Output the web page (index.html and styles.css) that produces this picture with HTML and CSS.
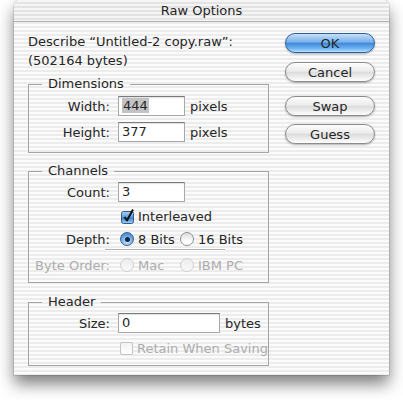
FILE: index.html
```html
<!DOCTYPE html>
<html lang="en">
<head>
    <meta charset="UTF-8">
    <meta name="viewport" content="width=device-width, initial-scale=1.0">
    <title>Raw Options</title>
    <link rel="stylesheet" href="styles.css">
</head>
<body>
    <div class="window">
        <div class="titlebar">Raw Options</div>

        <div class="body">
            <div class="main">
                <p class="describe">Describe “Untitled-2 copy.raw”:<br>(502164 bytes)</p>

                <!-- Dimensions -->
                <fieldset class="group dims">
                    <legend>Dimensions</legend>
                    <div class="row">
                        <span class="lbl">Width:</span>
                        <span class="field"><span class="sel">444</span></span>
                        <span class="unit">pixels</span>
                    </div>
                    <div class="row second">
                        <span class="lbl">Height:</span>
                        <span class="field">377</span>
                        <span class="unit">pixels</span>
                    </div>
                </fieldset>

                <!-- Channels -->
                <fieldset class="group channels">
                    <legend>Channels</legend>
                    <div class="row">
                        <span class="lbl">Count:</span>
                        <span class="field">3</span>
                    </div>
                    <div class="row check-row">
                        <span class="lbl"></span>
                        <span class="opt">
                            <svg class="check" width="16" height="16" viewBox="0 0 16 16">
                                <defs>
                                    <linearGradient id="gel" x1="0" y1="0" x2="0" y2="1">
                                        <stop offset="0" stop-color="#a9d0f5"/>
                                        <stop offset="0.45" stop-color="#5f9fe0"/>
                                        <stop offset="0.55" stop-color="#3c82d4"/>
                                        <stop offset="1" stop-color="#9fd6ff"/>
                                    </linearGradient>
                                </defs>
                                <rect x="1.5" y="3.5" width="12" height="12" rx="2" fill="url(#gel)" stroke="#3a5a85"/>
                                <path d="M4.5 9 L7 12.5 L13 1.5" fill="none" stroke="#111" stroke-width="2" stroke-linejoin="round"/>
                            </svg>
                            Interleaved
                        </span>
                    </div>
                    <div class="row depth-row">
                        <span class="lbl">Depth:</span>
                        <span class="opt first"><span class="radio on"></span>8 Bits</span>
                        <span class="opt"><span class="radio"></span>16 Bits</span>
                    </div>
                    <div class="sep"></div>
                    <div class="row byte-row disabled">
                        <span class="lbl">Byte Order:</span>
                        <span class="opt first"><span class="radio"></span>Mac</span>
                        <span class="opt"><span class="radio"></span>IBM PC</span>
                    </div>
                </fieldset>

                <!-- Header -->
                <fieldset class="group header">
                    <legend>Header</legend>
                    <div class="row">
                        <span class="lbl">Size:</span>
                        <span class="field wide">0</span>
                        <span class="unit">bytes</span>
                    </div>
                    <div class="row retain-row disabled">
                        <span class="lbl"></span>
                        <span class="opt"><span class="box"></span>Retain When Saving</span>
                    </div>
                </fieldset>
            </div>

            <div class="buttons">
                <div class="btn default">OK</div>
                <div class="btn cancel">Cancel</div>
                <div class="btn swap">Swap</div>
                <div class="btn guess">Guess</div>
            </div>
        </div>
    </div>
</body>
</html>
```

FILE: styles.css
```css
* {
    box-sizing: border-box;
}

html {
    background: #fff;
}

body {
    margin: 0;
    min-height: 400px;
    padding-bottom: 25px;
    font-family: "DejaVu Sans", "Noto Sans", sans-serif;
    font-size: 13px;
    color: #262626;
}

.window {
    width: 375px;
    height: 375px;
    margin-left: 14px;
    border-radius: 6px 6px 0 0;
    background: repeating-linear-gradient(to bottom, #fbfbfb 0, #fbfbfb 2px, #ececec 2px, #ececec 4px);
    box-shadow: 0 0 0 1px rgba(0, 0, 0, 0.1), 0 9px 16px rgba(0, 0, 0, 0.5);
}

.titlebar {
    height: 22px;
    line-height: 22px;
    text-align: center;
    border-bottom: 1px solid #b0b0b0;
    border-radius: 6px 6px 0 0;
    background: repeating-linear-gradient(to bottom, #f5f5f5 0, #f5f5f5 2px, #e3e3e3 2px, #e3e3e3 4px);
}

.body {
    display: flex;
    justify-content: space-between;
    padding: 10px 14px 0;
}

.main {
    width: 241px;
}

.describe {
    margin: 0;
    line-height: 19px;
}

/* group boxes */
.group {
    margin: 10px 0 0;
    padding: 3px 0 7px;
    border: 1px solid #a5a5a5;
    min-width: 0;
}

.group legend {
    margin-left: 13px;
    padding: 0 6px;
    line-height: 16px;
}

.dims {
    margin-top: 6px;
    padding: 4px 0 10px;
}

.header {
    margin-top: 11px;
    padding-bottom: 7px;
}

.row {
    display: flex;
    align-items: center;
    height: 20px;
}

.row.second {
    margin-top: 6px;
}

.check-row {
    margin-top: 4px;
}

.depth-row {
    margin-top: 3px;
}

.byte-row {
    margin-top: 4px;
}

.retain-row {
    margin-top: 5px;
}

.lbl {
    width: 81px;
    margin-right: 8px;
    text-align: right;
    flex: none;
}

.disabled {
    color: #acacac;
}

/* text fields */
.field {
    width: 67px;
    height: 20px;
    padding-left: 3px;
    line-height: 18px;
    background: #fff;
    border: 1px solid #a8a8a8;
    border-top-color: #7a7a7a;
    box-shadow: inset 0 1px 1px rgba(0, 0, 0, 0.12);
}

.field.wide {
    width: 102px;
}

.sel {
    display: inline-block;
    background: #c3c3c3;
    line-height: 15px;
    padding: 0 1px;
}

.unit {
    margin-left: 5px;
}

.sep {
    width: 120px;
    height: 2px;
    margin: 0 0 0 76px;
    border-top: 1px solid #b0b0b0;
    border-bottom: 1px solid #fff;
}

/* checkboxes and radios */
.opt {
    display: flex;
    align-items: center;
    margin-left: 2px;
}

.opt.first {
    width: 58px;
}

.check {
    margin-right: 2px;
    overflow: visible;
}

.box {
    width: 13px;
    height: 13px;
    margin-right: 4px;
    border: 1px solid #c4c4c4;
    border-radius: 2px;
    background: linear-gradient(#f2f2f2, #fff);
}

.radio {
    width: 14px;
    height: 14px;
    margin-right: 4px;
    border-radius: 50%;
    border: 1px solid #8a8f96;
    background: linear-gradient(#dcdcdc, #fdfdfd 70%);
    display: flex;
    align-items: center;
    justify-content: center;
}

.radio.on {
    border-color: #3b5f8c;
    background: radial-gradient(circle at 50% 75%, #c8e8ff 0, #6aa9e4 55%, #3370bf 100%);
}

.radio.on::before {
    content: "";
    width: 5px;
    height: 5px;
    border-radius: 50%;
    background: #16263b;
}

.disabled .radio {
    border-color: #d0d0d0;
    background: linear-gradient(#ececec, #fafafa);
}

/* push buttons */
.buttons {
    width: 90px;
    display: flex;
    flex-direction: column;
    padding-top: 1px;
}

.btn {
    height: 20px;
    line-height: 19px;
    text-align: center;
    border-radius: 10px;
    border: 1px solid #8c8c8c;
    background: linear-gradient(#fdfdfd 0%, #ececec 45%, #dcdcdc 52%, #efefef 80%, #fff 100%);
    box-shadow: 0 1px 2px rgba(0, 0, 0, 0.3);
}

.btn.default {
    border-color: #2f5f9c;
    background: linear-gradient(#c4e0f8 0%, #78b0ea 45%, #4189dc 52%, #6cb3f2 80%, #b6e2ff 100%);
}

.btn.cancel {
    margin-top: 9px;
}

.btn.swap {
    margin-top: 14px;
}

.btn.guess {
    margin-top: 8px;
}
```
